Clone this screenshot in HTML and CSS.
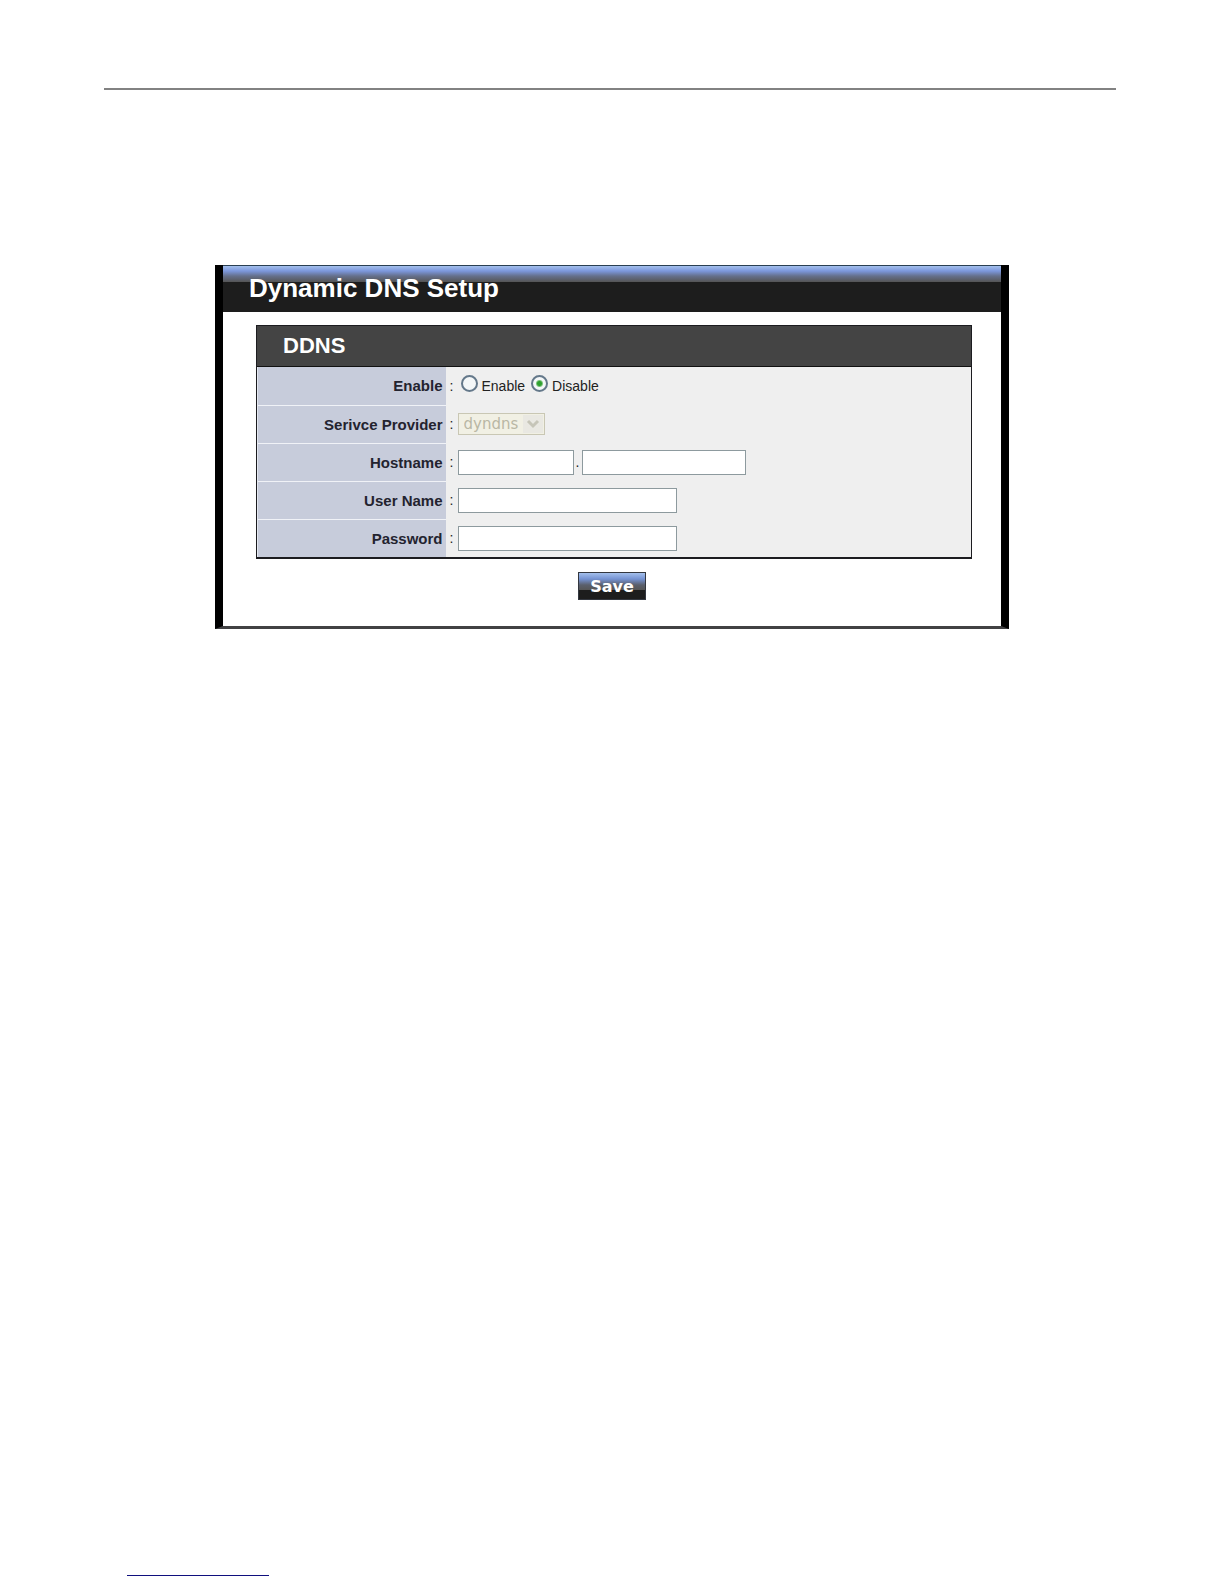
FILE: index.html
```
<!DOCTYPE html>
<html lang="en">
<head>
    <meta charset="UTF-8">
    <meta name="viewport" content="width=device-width, initial-scale=1.0">
    <title>Dynamic DNS Setup</title>
    <link rel="stylesheet" href="styles.css">
</head>
<body>
    <header class="page-header"></header>

    <main class="panel">
        <h1 class="panel-title">Dynamic DNS Setup</h1>
        <form class="panel-body">
            <section class="group">
                <h2 class="group-title">DDNS</h2>
                <table class="settings">
                    <tr>
                        <th scope="row">Enable</th>
                        <td>
                            <div class="field">
                                <span class="colon">:</span>
                                <label class="option"><input type="radio" name="ddns" value="1">Enable</label>
                                <label class="option"><input type="radio" name="ddns" value="0" checked>Disable</label>
                            </div>
                        </td>
                    </tr>
                    <tr>
                        <th scope="row"><label for="provider">Serivce Provider</label></th>
                        <td>
                            <div class="field">
                                <span class="colon">:</span>
                                <span class="select-wrap">
                                    <select id="provider" disabled>
                                        <option>dyndns</option>
                                    </select>
                                    <svg class="arrow" viewBox="0 0 20 18" aria-hidden="true">
                                        <rect width="20" height="18" fill="#e9e8e2"/>
                                        <path d="M5 6l5 5 5-5" fill="none" stroke="#c6c5b8" stroke-width="3"/>
                                    </svg>
                                </span>
                            </div>
                        </td>
                    </tr>
                    <tr>
                        <th scope="row"><label for="hostname">Hostname</label></th>
                        <td>
                            <div class="field">
                                <span class="colon">:</span>
                                <input class="text host" type="text" id="hostname">
                                <span class="dot">.</span>
                                <input class="text domain" type="text" aria-label="Domain">
                            </div>
                        </td>
                    </tr>
                    <tr>
                        <th scope="row"><label for="username">User Name</label></th>
                        <td>
                            <div class="field">
                                <span class="colon">:</span>
                                <input class="text" type="text" id="username">
                            </div>
                        </td>
                    </tr>
                    <tr>
                        <th scope="row"><label for="password">Password</label></th>
                        <td>
                            <div class="field">
                                <span class="colon">:</span>
                                <input class="text" type="password" id="password">
                            </div>
                        </td>
                    </tr>
                </table>
            </section>
            <button class="save" type="submit">Save</button>
        </form>
    </main>

    <footer class="page-footer">
        <div class="footer-line"></div>
    </footer>
</body>
</html>
```
FILE: styles.css
```
* {
    box-sizing: border-box;
}
body {
    display: flex;
    flex-direction: column;
    min-height: 100vh;
    margin: 0;
    background-color: #fff;
    color: #222;
    font-family: "Liberation Sans", Arial, sans-serif;
    font-size: 14px;
}
.page-header {
    margin: 88px 108px 175px 104px;
    border-top: 2px solid #828282;
}
.panel {
    margin: 0 215px;
    border: solid #000;
    border-width: 0 8px 3px;
    border-bottom-color: #414143;
}
.panel-title {
    height: 47px;
    margin: 0;
    padding-left: 26px;
    border-top: 1px solid #2a3f52;
    background: linear-gradient(#a4c0ec 0, #7c97dc 5px, #65708c 10px, #555 16px, #1d1d1d 16px);
    color: #fff;
    font-size: 26px;
    line-height: 45px;
}
.panel-body {
    display: flex;
    flex-direction: column;
    align-items: center;
    padding: 13px 0 26px;
}
.group {
    align-self: stretch;
    margin: 0 29px 13px 33px;
    border: 1px solid #1c1c20;
    border-bottom-width: 2px;
}
.group-title {
    height: 41px;
    margin: 0;
    padding-left: 26px;
    border-bottom: 1px solid #111;
    background-color: #444;
    color: #fff;
    font-size: 22px;
    line-height: 40px;
}
.settings {
    width: 100%;
    border-collapse: collapse;
    background-color: #efefef;
}
.settings th,
.settings td {
    height: 38px;
    padding: 0;
}
.settings th {
    width: 188px;
    padding-right: 3px;
    border-left: 1px solid #e4e8f0;
    background-color: #c7ccdb;
    color: #23232f;
    font-size: 15px;
    text-align: right;
}
.settings tr + tr th {
    border-top: 1px solid #f0f2f7;
}
.field {
    display: flex;
    align-items: center;
}
.colon {
    width: 12px;
    padding-left: 4px;
}
.option {
    display: flex;
    align-items: center;
    gap: 4px;
    margin: 0 3px;
}
.option input {
    appearance: none;
    width: 17px;
    height: 17px;
    margin: 0 0 6px;
    border: 2px solid #64788a;
    border-radius: 50%;
    background-color: #f4f7f8;
}
.option input:checked {
    background-image: radial-gradient(circle, #2fa02f 2px, #7cc47c 3px, #f4f7f8 4px);
}
.select-wrap {
    position: relative;
    width: 87px;
    height: 22px;
}
.select-wrap select {
    appearance: none;
    width: 100%;
    height: 100%;
    padding: 0 5px;
    border: 1px solid #c9c7b4;
    border-radius: 0;
    background-color: #f1f0e4;
    color: #b9b7a4;
    font-family: "DejaVu Sans", Verdana, sans-serif;
    font-size: 15px;
    opacity: 1;
}
.arrow {
    position: absolute;
    top: 2px;
    right: 2px;
    width: 20px;
    height: 18px;
    pointer-events: none;
}
.text {
    width: 219px;
    height: 25px;
    padding: 2px 4px;
    border: 1px solid #8d9a9e;
    border-radius: 0;
    background-color: #fff;
    font: inherit;
}
.host {
    width: 116px;
}
.domain {
    width: 164px;
}
.dot {
    width: 8px;
    text-align: center;
}
.save {
    width: 68px;
    height: 28px;
    padding: 0;
    border: 1px solid #33373f;
    background: linear-gradient(#a4c0ec 0, #7593d3 6px, #5a5f6b 12px, #555 17px, #1d1d1d 17px);
    color: #fff;
    font-family: "DejaVu Sans", Verdana, sans-serif;
    font-size: 16px;
    font-weight: bold;
}
.page-footer {
    margin-top: auto;
    padding: 0 127px 8px;
}
.footer-line {
    width: 142px;
    border-top: 1px solid #10107e;
}
```
